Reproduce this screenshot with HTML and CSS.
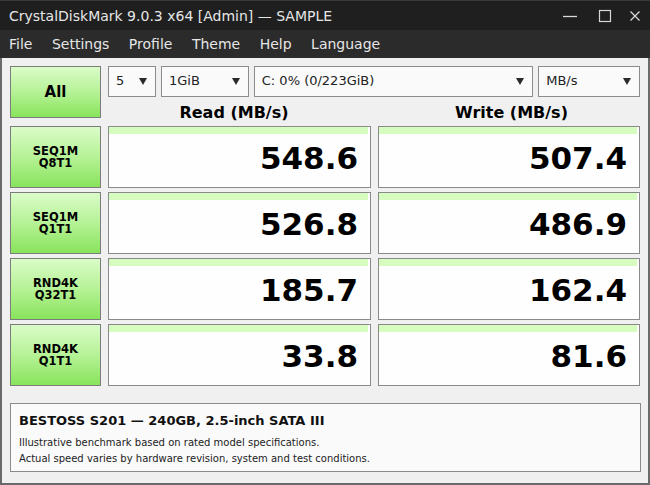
FILE: index.html
```html
<!DOCTYPE html>
<html>
<head>
<meta charset="utf-8">
<link rel="stylesheet" href="styles.css">
</head>
<body>
<div class="window">
  <div class="titlebar">
    <span class="title">CrystalDiskMark 9.0.3 x64 [Admin] — SAMPLE</span>
    <div class="controls">
      <svg class="ctl c-min" width="16" height="16" viewBox="0 0 16 16"><line x1="1" y1="8.5" x2="15" y2="8.5" stroke="#d8d8d8" stroke-width="1.3"/></svg>
      <svg class="ctl c-max" width="16" height="16" viewBox="0 0 16 16"><rect x="2.5" y="2.5" width="11" height="11" fill="none" stroke="#d8d8d8" stroke-width="1.2"/></svg>
      <svg class="ctl c-close" width="16" height="16" viewBox="0 0 16 16"><path d="M3.5 3.5 L12.5 12.5 M12.5 3.5 L3.5 12.5" stroke="#d8d8d8" stroke-width="1.3"/></svg>
    </div>
  </div>
  <div class="menubar">
    <span class="menu">File</span>
    <span class="menu">Settings</span>
    <span class="menu">Profile</span>
    <span class="menu">Theme</span>
    <span class="menu">Help</span>
    <span class="menu">Language</span>
  </div>
  <div class="main">
    <div class="grid">
      <div class="btn all">All</div>
      <div class="top">
        <div class="selects">
          <div class="sel s1"><span>5</span><i class="arr"></i></div>
          <div class="sel s2"><span>1GiB</span><i class="arr"></i></div>
          <div class="sel s3"><span>C: 0% (0/223GiB)</span><i class="arr"></i></div>
          <div class="sel s4"><span>MB/s</span><i class="arr"></i></div>
        </div>
        <div class="heads">
          <div class="head h-read">Read (MB/s)</div>
          <div class="head h-write">Write (MB/s)</div>
        </div>
      </div>

      <div class="btn test"><span>SEQ1M</span><span>Q8T1</span></div>
      <div class="res"><div class="bar"></div><div class="val">548.6</div></div>
      <div class="res"><div class="bar"></div><div class="val">507.4</div></div>

      <div class="btn test"><span>SEQ1M</span><span>Q1T1</span></div>
      <div class="res"><div class="bar"></div><div class="val">526.8</div></div>
      <div class="res"><div class="bar"></div><div class="val">486.9</div></div>

      <div class="btn test"><span>RND4K</span><span>Q32T1</span></div>
      <div class="res"><div class="bar"></div><div class="val">185.7</div></div>
      <div class="res"><div class="bar"></div><div class="val">162.4</div></div>

      <div class="btn test"><span>RND4K</span><span>Q1T1</span></div>
      <div class="res"><div class="bar"></div><div class="val">33.8</div></div>
      <div class="res"><div class="bar"></div><div class="val">81.6</div></div>
    </div>
    <div class="info">
      <div class="info-title">BESTOSS S201 — 240GB, 2.5-inch SATA III</div>
      <div class="info-line">Illustrative benchmark based on rated model specifications.</div>
      <div class="info-line">Actual speed varies by hardware revision, system and test conditions.</div>
    </div>
  </div>
</div>
</body>
</html>
```
FILE: styles.css
```css
* { box-sizing: border-box; }
html, body { margin: 0; padding: 0; }
body {
  width: 650px;
  height: 485px;
  overflow: hidden;
  font-family: "DejaVu Sans", "Liberation Sans", sans-serif;
  background: #f0f0f0;
}
.window { width: 650px; height: 485px; display: flex; flex-direction: column; }
.titlebar {
  height: 30px;
  background: #1f1f1f;
  border-top: 1px solid #3a3a3a;
  display: flex;
  align-items: center;
  justify-content: space-between;
  padding-left: 9px;
  color: #e6e6e6;
  font-size: 14px;
}
.controls { display: flex; align-items: center; padding-right: 7px; }
.ctl { display: block; }
.c-max { margin-left: 19px; }
.c-close { margin-left: 14px; }
.menubar {
  height: 28px;
  background: #2b2b2b;
  display: flex;
  align-items: center;
  padding-left: 9px;
  color: #e6e6e6;
  font-size: 14px;
}
.menu { margin-right: 19.5px; }
.main {
  flex: 1;
  border: 2px solid #6a6a6a;
  border-top: none;
  padding: 8px 7px 0 8px;
  background: #f0f0f0;
}
.grid {
  display: grid;
  grid-template-columns: 91px 263px 262px;
  grid-template-rows: 56px 62px 62px 62px 62px;
  column-gap: 7px;
  row-gap: 4px;
}
.btn {
  border: 1px solid #7c7c7c;
  background: linear-gradient(to bottom, #dafcc8 0%, #b6f296 50%, #88e45c 100%);
  display: flex;
  flex-direction: column;
  align-items: center;
  justify-content: center;
  text-align: center;
  font-weight: bold;
  color: #000;
}
.all { height: 52px; font-size: 15px; }
.test { font-size: 11.5px; line-height: 12.5px; }
.test span { display: block; height: 12.5px; }
.top { grid-column: 2 / 4; display: flex; flex-direction: column; }
.selects { display: flex; gap: 5px; height: 31px; }
.sel {
  border: 1px solid #8c8c8c;
  background: #fafafa;
  display: flex;
  align-items: center;
  justify-content: space-between;
  padding: 0 8px 0 7px;
  font-size: 13px;
  color: #222;
}
.sel span { margin-top: -2px; }
.s1 { width: 48px; }
.s2 { width: 88px; }
.s3 { width: 280px; }
.s4 { width: 102px; }
.arr {
  width: 0; height: 0;
  border-left: 4.5px solid transparent;
  border-right: 4.5px solid transparent;
  border-top: 7px solid #2a2a2a;
}
.heads { display: grid; grid-template-columns: 263px 262px; column-gap: 7px; flex: 1; }
.head {
  font-size: 16px;
  font-weight: bold;
  color: #000;
  text-align: center;
  padding-top: 6px;
}
.h-read { padding-right: 11px; }
.h-write { padding-left: 5px; }
.res {
  border: 1px solid #8a8a8a;
  background: #fefefe;
  display: flex;
  flex-direction: column;
}
.bar { height: 7px; background: #d6fcc0; margin-right: 2px; }
.val {
  flex: 1;
  font-size: 31px;
  font-weight: bold;
  color: #000;
  text-align: right;
  padding-right: 12px;
  padding-top: 6px;
}
.info {
  margin-top: 17px;
  border: 1px solid #8a8a8a;
  background: #fafafa;
  height: 69px;
  padding: 9px 8px 0 8px;
}
.info-title { font-size: 13px; line-height: 15px; font-weight: bold; color: #111; margin-bottom: 7px; }
.info-line { font-size: 10px; color: #222; line-height: 16px; }
```
